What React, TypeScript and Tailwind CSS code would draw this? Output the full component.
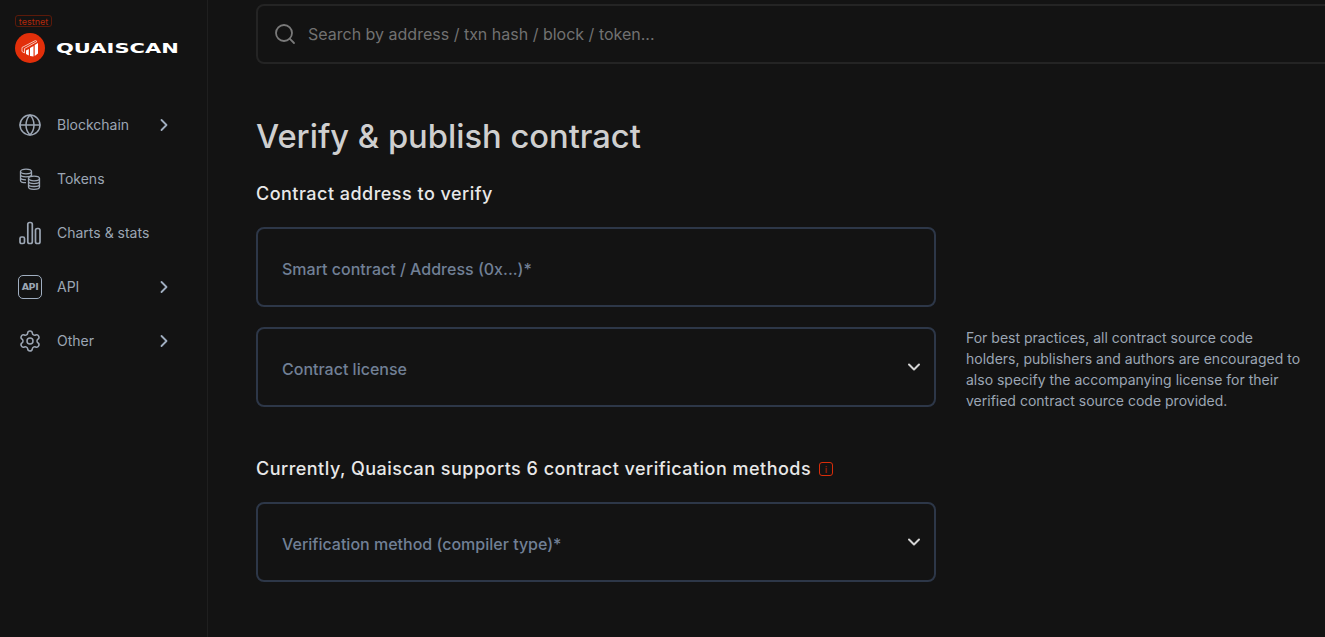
import React from 'react';
import { ChevronDown, ChevronRight, Globe, Search, Settings } from 'lucide-react';

const TokensIcon = () => (
  <svg width="22" height="22" viewBox="0 0 22 22" fill="none" stroke="currentColor" strokeWidth="1.3">
    <ellipse cx="7" cy="3.5" rx="5.5" ry="2.3" />
    <path d="M1.5 3.5v9c0 1.2 2.2 2.2 5.5 2.2M1.5 6.5c0 1.3 2.4 2.3 5.5 2.3s5.5-1 5.5-2.3M12.5 3.5v5M1.5 9.5c0 1.3 2.4 2.3 5.5 2.3" />
    <ellipse cx="15" cy="10.5" rx="5.5" ry="2.3" />
    <path d="M9.5 10.5v8.5c0 1.3 2.4 2.3 5.5 2.3s5.500-1 5.500-2.300v-8.500M9.500 13.300c0 1.300 2.400 2.300 5.500 2.300s5.500-1 5.500-2.300M9.500 16.200c0 1.300 2.400 2.300 5.500 2.300s5.500-1 5.500-2.300" />
  </svg>
);

const ChartsIcon = () => (
  <svg width="24" height="24" viewBox="0 0 24 24" fill="none" stroke="currentColor" strokeWidth="1.7">
    <rect x="2" y="16" width="4.500" height="6.500" rx="1.500" />
    <rect x="9.800" y="1.500" width="4.500" height="21" rx="1.800" />
    <rect x="17.500" y="7.500" width="4.500" height="15" rx="1.800" />
  </svg>
);

const ApiIcon = () => (
  <div className="flex h-[24px] w-[24px] items-center justify-center rounded-[5px] border-[1.5px] border-[#a0aec0] font-['DejaVu_Sans',sans-serif] text-[9.500px] font-bold leading-none tracking-[-0.4px]">
    API
  </div>
);

const QuaiMark = () => (
  <svg width="30" height="30" viewBox="0 0 30 30" fill="none">
    <circle cx="15" cy="15" r="15" fill="#e22f0a" />
    <path d="M7 14.500 L20.500 7.500 L22 8.500 L9.500 15.500 V20 L7 18.500 Z" fill="none" stroke="#f8d4cb" strokeWidth="0.900" />
    <path d="M11 17.500 L13.800 16 V22.500 L11 21 Z" fill="#fff" />
    <path d="M15 15 L18.500 13 V23.500 L15 23 Z" fill="#fff" />
    <path d="M19.700 12 L23 10 V20.500 L19.700 23 Z" fill="#fff" />
  </svg>
);

const navItems = [
  { label: 'Blockchain', icon: <Globe size={24} strokeWidth={1.5} />, arrow: true },
  { label: 'Tokens', icon: <TokensIcon />, arrow: false },
  { label: 'Charts & stats', icon: <ChartsIcon />, arrow: false },
  { label: 'API', icon: <ApiIcon />, arrow: true },
  { label: 'Other', icon: <Settings size={24} strokeWidth={1.5} />, arrow: true },
];

const fieldClass =
  'flex h-20 w-[680px] items-center justify-between rounded-lg border-2 border-[#2d3748] pl-6 pr-[10px] text-base font-medium text-[#718096]';

export default function App() {
  return (
    <div className="flex h-[637px] w-[1325px] overflow-hidden bg-[#131313] font-['Inter',sans-serif]">
      <aside className="flex w-[208px] shrink-0 flex-col border-r border-[#1f1f1f] pl-[15px]">
        <div className="mt-[15px] flex h-[12px] w-[37px] items-center justify-center rounded-[3px] border border-[#5c1a0a] text-[9px] leading-none text-[#b3280a]">
          testnet
        </div>
        <div className="mt-[6px] flex items-center gap-[11px]">
          <QuaiMark />
          <span className="origin-left scale-x-[1.45] font-['DejaVu_Sans',sans-serif] text-[14.5px] font-bold leading-none text-white">
            QUAISCAN
          </span>
        </div>
        <nav className="mt-[35px] flex flex-col">
          {navItems.map((item) => (
            <div key={item.label} className="flex h-[54px] items-center text-sm text-[#9ca6b4]">
              <div className="flex w-[30px] justify-center">{item.icon}</div>
              <span className="ml-[12px] w-[97px]">{item.label}</span>
              {item.arrow && <ChevronRight size={20} strokeWidth={2.200} className="text-[#a0aec0]" />}
            </div>
          ))}
        </nav>
      </aside>

      <main className="min-w-0 flex-1 pl-[48px]">
        <div className="mt-[4px] flex h-[60px] w-[1100px] items-center rounded-lg border-2 border-[#242424] pl-[15px] text-base text-[#717171]">
          <Search size={24} strokeWidth={1.8} className="text-[#7a7a7a]" />
          <span className="ml-[11px]">Search by address / txn hash / block / token...</span>
        </div>

        <h1 className="mt-[48px] text-[32.700px] font-medium leading-[48px] text-[#cfcfcf]">
          Verify &amp; publish contract
        </h1>

        <h2 className="mt-[22px] text-lg font-medium leading-[24px] tracking-[0.48px] text-[#e8e8e8]">
          Contract address to verify
        </h2>

        <div className={`mt-[21px] ${fieldClass}`}>
          <span className="pt-[4px]">Smart contract / Address (0x...)*</span>
        </div>

        <div className="mt-[20px] flex">
          <div className={fieldClass}>
            <span className="pt-[4px]">Contract license</span>
            <ChevronDown size={20} strokeWidth={2.400} className="text-[#d4d4d4]" />
          </div>
          <p className="mb-[-1px] ml-[30px] w-[340px] self-end text-sm leading-[21px] text-[#9ca6b4]">
            For best practices, all contract source code holders, publishers and authors are encouraged to also specify the accompanying license for their verified contract source code provided.
          </p>
        </div>

        <div className="mt-[46px] flex items-center gap-2">
          <h2 className="text-lg font-medium leading-[26px] tracking-[0.48px] text-[#e8e8e8]">
            Currently, Quaiscan supports 6 contract verification methods
          </h2>
          <div className="flex h-[14px] w-[14px] items-center justify-center rounded-[3px] border border-[#d92d0a] text-[9px] font-bold leading-none text-[#8f1f08]">
            i
          </div>
        </div>

        <div className={`mt-[20px] ${fieldClass}`}>
          <span className="pt-[4px]">Verification method (compiler type)*</span>
          <ChevronDown size={20} strokeWidth={2.400} className="text-[#d4d4d4]" />
        </div>
      </main>
    </div>
  );
}
